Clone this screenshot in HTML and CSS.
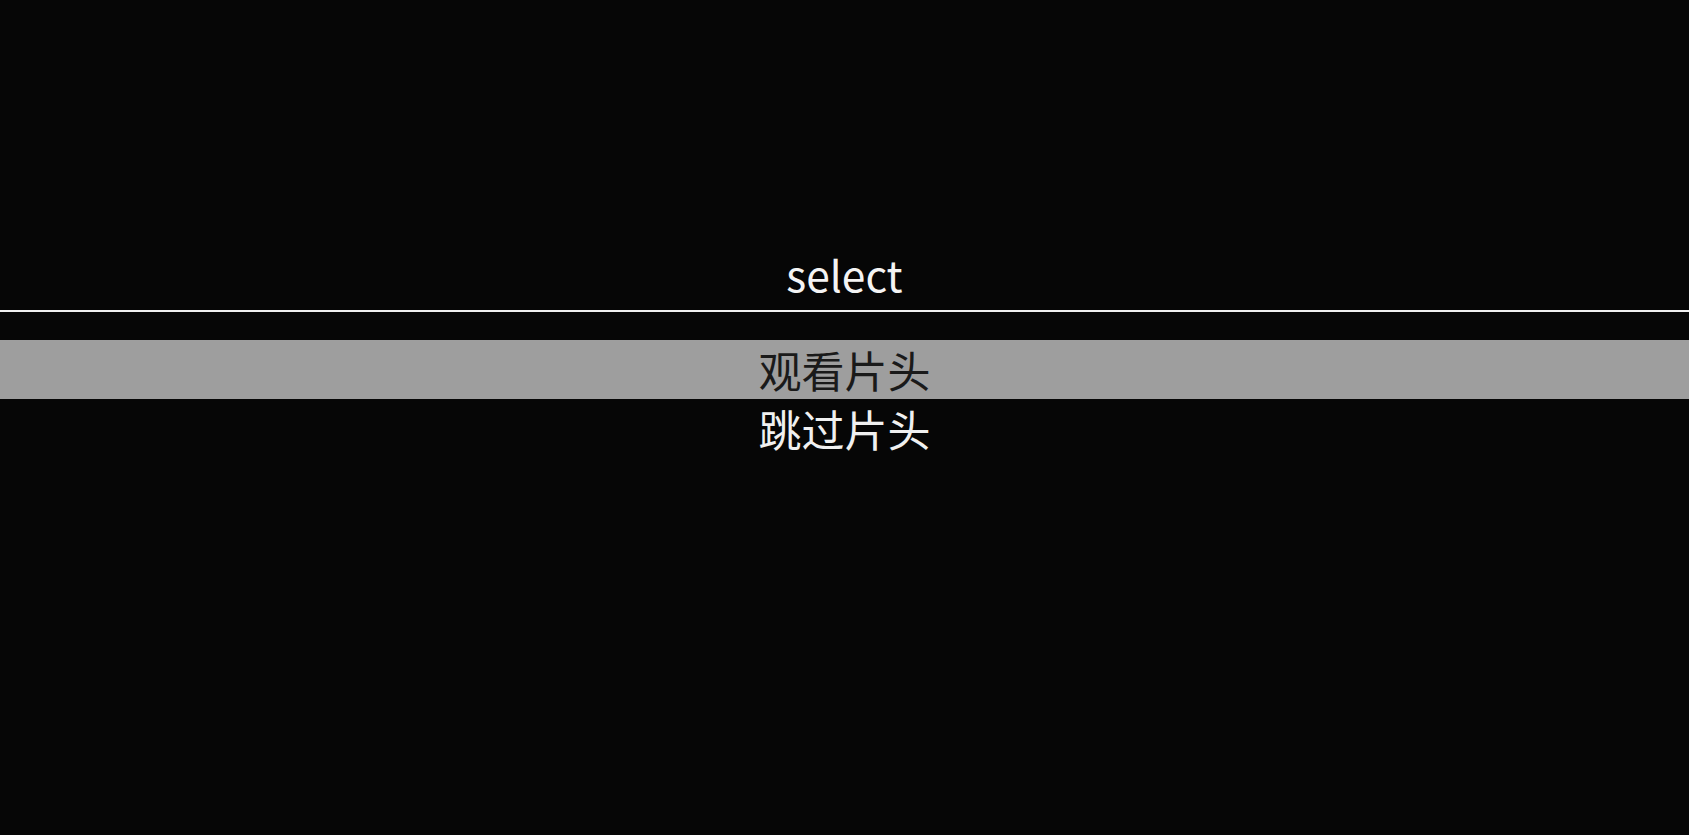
FILE: index.html
```html
<!DOCTYPE html>
<html lang="zh">
<head>
<meta charset="utf-8">
<title>select</title>
<link rel="stylesheet" href="styles.css">
</head>
<body>
<main class="screen">
  <h1 class="title">select</h1>
  <div class="divider"></div>
  <ul class="menu">
    <li class="item item-active">观看片头</li>
    <li class="item">跳过片头</li>
  </ul>
</main>
</body>
</html>
```
FILE: styles.css
```css
html, body {
  margin: 0;
  padding: 0;
  height: 100%;
  background: #060606;
}
.screen {
  display: flex;
  flex-direction: column;
  height: 100%;
  padding-top: 243px;
  box-sizing: border-box;
  font-family: "Noto Sans CJK SC", "Noto Sans", sans-serif;
  color: #f2f2f2;
}
.title {
  margin: 0;
  font-size: 42.5px;
  font-weight: 400;
  line-height: 61px;
  text-align: center;
  color: #f4f4f4;
}
.divider {
  margin-top: 6px;
  height: 2px;
  background: #f0f0f0;
}
.menu {
  list-style: none;
  margin: 28px 0 0;
  padding: 0;
}
.item {
  height: 59px;
  line-height: 59px;
  font-size: 43px;
  text-align: center;
  color: #f0f0f0;
}
.item-active {
  background: #9e9e9e;
  color: #1a1a1a;
}
```
